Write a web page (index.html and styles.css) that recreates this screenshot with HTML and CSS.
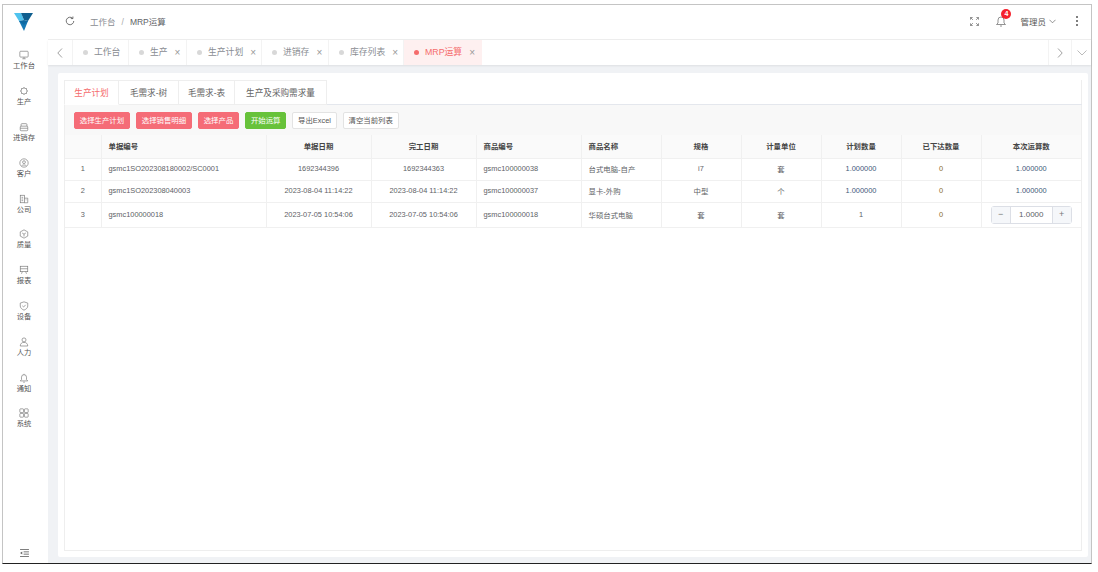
FILE: index.html
```html
<!DOCTYPE html>
<html lang="zh-CN">
<head>
    <meta charset="UTF-8">
    <title>MRP运算</title>
    <link rel="stylesheet" href="styles.css">
</head>
<body>
<div class="frame">
    <aside class="sidebar">
        <div class="logo">
            <svg width="20" height="19" viewBox="0 0 20 19">
                <polygon points="0,1 7,1 10,8 5,9" fill="#4fc3ee"/>
                <polygon points="7,1 19,1 14,9 10,8" fill="#0f5f8f"/>
                <polygon points="5,9 14,9 10,19" fill="#1679b5"/>
                <polygon points="5,9 10,8 14,9 10,13" fill="#0e6aa3"/>
            </svg>
        </div>
        <nav class="menu">
            <a class="menu-item">
                <svg class="ico" viewBox="0 0 12 12"><rect x="1" y="1.500" width="10" height="7" rx="1"/><path d="M4 10.500h4M6 8.500v2"/></svg>
                <span>工作台</span>
            </a>
            <a class="menu-item">
                <svg class="ico" viewBox="0 0 12 12"><circle cx="6" cy="6" r="3.600"/><path d="M6 1.200v1.200M6 9.600v1.200M1.200 6h1.200M9.600 6h1.200M2.600 2.600l.9.900M8.500 8.500l.9.900M9.400 2.600l-.9.900M3.500 8.500l-.9.900"/></svg>
                <span>生产</span>
            </a>
            <a class="menu-item">
                <svg class="ico" viewBox="0 0 12 12"><path d="M2.500 5V3a1 1 0 0 1 1-1h5a1 1 0 0 1 1 1v2"/><rect x="1.500" y="5" width="9" height="5.500" rx="1"/><path d="M1.500 7.500h9"/></svg>
                <span>进销存</span>
            </a>
            <a class="menu-item">
                <svg class="ico" viewBox="0 0 12 12"><circle cx="6" cy="6" r="5"/><circle cx="6" cy="5" r="1.700"/><path d="M3.200 9.600c.6-1.700 5-1.700 5.600 0"/></svg>
                <span>客户</span>
            </a>
            <a class="menu-item">
                <svg class="ico" viewBox="0 0 12 12"><rect x="1.500" y="1.500" width="5" height="9"/><path d="M6.500 5h4v5.500h-4M3 4h2M3 6h2M3 8h2M8 7h1"/></svg>
                <span>公司</span>
            </a>
            <a class="menu-item">
                <svg class="ico" viewBox="0 0 12 12"><path d="M6 1l4.500 2.500v5L6 11 1.500 8.500v-5z"/><path d="M3.800 4.800L6 6.200l2.200-1.400M6 6.200V9"/></svg>
                <span>质量</span>
            </a>
            <a class="menu-item">
                <svg class="ico" viewBox="0 0 12 12"><rect x="1.500" y="1.500" width="9" height="6.500"/><path d="M1.500 4.500h9M4 8l-1 2.500M8 8l1 2.500"/></svg>
                <span>报表</span>
            </a>
            <a class="menu-item">
                <svg class="ico" viewBox="0 0 12 12"><path d="M6 1l4.500 1.500V6c0 2.500-2.300 4-4.500 5-2.200-1-4.500-2.500-4.500-5V2.500z"/><path d="M4 5.800L5.500 7.200 8 4.600"/></svg>
                <span>设备</span>
            </a>
            <a class="menu-item">
                <svg class="ico" viewBox="0 0 12 12"><circle cx="6" cy="3.500" r="2.400"/><path d="M1.500 10.800c0-2.800 2-4.400 4.500-4.400s4.500 1.600 4.500 4.400z"/></svg>
                <span>人力</span>
            </a>
            <a class="menu-item">
                <svg class="ico" viewBox="0 0 12 12"><path d="M1.500 9.500h9L9 8V5a3 3 0 0 0-6 0v3zM5 11h2M6 1v1"/></svg>
                <span>通知</span>
            </a>
            <a class="menu-item">
                <svg class="ico" viewBox="0 0 12 12"><rect x="1" y="1" width="4.500" height="4.500" rx=".8"/><rect x="6.500" y="1" width="4.500" height="4.500" rx=".8"/><rect x="1" y="6.500" width="4.500" height="4.500" rx=".8"/><rect x="6.500" y="6.500" width="4.500" height="4.500" rx=".8"/></svg>
                <span>系统</span>
            </a>
        </nav>
        <div class="fold">
            <svg width="9" height="8" viewBox="0 0 10 9"><path d="M0 .5h10M4 3.200h6M4 5.800h6M0 8.500h10" stroke="#666" fill="none"/><path d="M0 4.500l2.500-1.800v3.600z" fill="#666"/></svg>
        </div>
    </aside>

    <div class="main">
        <header class="topbar">
            <svg class="refresh" viewBox="0 0 12 12"><path d="M10.500 6a4.500 4.500 0 1 1-1.400-3.300M9.500.6v2.500H7"/></svg>
            <div class="crumb"><span>工作台</span><i>/</i><b>MRP运算</b></div>
            <div class="top-right">
                <svg class="full" viewBox="0 0 10 10"><path d="M.5 3V.5H3M7 .5h2.500V3M.5 7v2.500H3M7 9.500h2.500V7M.8.800l2.400 2.400M9.200.800L6.800 3.200M.8 9.200l2.400-2.400M9.200 9.200L6.800 6.800"/></svg>
                <div class="bell">
                    <svg class="ico" viewBox="0 0 12 12"><path d="M1.500 9.500h9L9 8V5a3 3 0 0 0-6 0v3zM5 11h2"/></svg>
                    <em class="badge">4</em>
                </div>
                <div class="user">管理员<svg class="chev" viewBox="0 0 8 5"><path d="M.5.500L4 4 7.500.500"/></svg></div>
                <div class="dots"><u></u><u></u><u></u></div>
            </div>
        </header>

        <div class="tagbar">
            <div class="tag-arrow"><svg viewBox="0 0 6 10"><path d="M5 .5L.8 5 5 9.500"/></svg></div>
            <div class="tags">
                <div class="tag w-a"><i></i>工作台</div>
                <div class="tag w-b"><i></i>生产<s>×</s></div>
                <div class="tag w-c"><i></i>生产计划<s>×</s></div>
                <div class="tag w-d"><i></i>进销存<s>×</s></div>
                <div class="tag w-c"><i></i>库存列表<s>×</s></div>
                <div class="tag w-e active"><i></i>MRP运算<s>×</s></div>
            </div>
            <div class="tag-arrow right"><svg viewBox="0 0 6 10"><path d="M1 .5L5.200 5 1 9.500"/></svg></div>
            <div class="tag-arrow more"><svg viewBox="0 0 10 6"><path d="M.5.500L5 5 9.500.500"/></svg></div>
        </div>

        <div class="content">
            <section class="card">
                <div class="tabbox">
                    <div class="tabs">
                        <div class="tab active">生产计划</div>
                        <div class="tab">毛需求-树</div>
                        <div class="tab">毛需求-表</div>
                        <div class="tab">生产及采购需求量</div>
                    </div>
                    <div class="toolbar">
                        <button class="btn danger">选择生产计划</button>
                        <button class="btn danger">选择销售明细</button>
                        <button class="btn danger">选择产品</button>
                        <button class="btn success">开始运算</button>
                        <button class="btn">导出Excel</button>
                        <button class="btn">清空当前列表</button>
                    </div>
                    <table class="grid">
                        <colgroup>
                            <col class="c-no"><col class="c-code"><col class="c-date"><col class="c-date">
                            <col class="c-date"><col class="c-name"><col class="c-mid"><col class="c-mid">
                            <col class="c-mid"><col class="c-mid"><col>
                        </colgroup>
                        <thead>
                            <tr>
                                <th></th><th class="left">单据编号</th><th>单据日期</th><th>完工日期</th>
                                <th class="left">商品编号</th><th class="left">商品名称</th><th>规格</th><th>计量单位</th>
                                <th>计划数量</th><th>已下达数量</th><th>本次运算数</th>
                            </tr>
                        </thead>
                        <tbody>
                            <tr>
                                <td>1</td><td class="left">gsmc1SO202308180002/SC0001</td><td>1692344396</td><td>1692344363</td>
                                <td class="left">gsmc100000038</td><td class="left">台式电脑-自产</td><td>i7</td><td>套</td>
                                <td class="qty">1.000000</td><td class="zero">0</td><td class="qty">1.000000</td>
                            </tr>
                            <tr>
                                <td>2</td><td class="left">gsmc1SO202308040003</td><td>2023-08-04 11:14:22</td><td>2023-08-04 11:14:22</td>
                                <td class="left">gsmc100000037</td><td class="left">显卡-外购</td><td>中型</td><td>个</td>
                                <td class="qty">1.000000</td><td class="zero">0</td><td class="qty">1.000000</td>
                            </tr>
                            <tr class="tall">
                                <td>3</td><td class="left">gsmc100000018</td><td>2023-07-05 10:54:06</td><td>2023-07-05 10:54:06</td>
                                <td class="left">gsmc100000018</td><td class="left">华硕台式电脑</td><td>套</td><td>套</td>
                                <td>1</td><td class="zero">0</td>
                                <td>
                                    <div class="stepper"><span>−</span><b>1.0000</b><span>+</span></div>
                                </td>
                            </tr>
                        </tbody>
                    </table>
                </div>
            </section>
        </div>
    </div>
</div>
</body>
</html>
```
FILE: styles.css
```css
* {
    margin: 0;
    padding: 0;
    box-sizing: border-box;
}

html, body {
    height: 100%;
    background-color: #fff;
    overflow: hidden;
}

body {
    font-family: "Liberation Sans", "Noto Sans CJK SC", sans-serif;
    color: #606266;
    padding: 4px 0 0 2px;
}

.frame {
    width: 1090px;
    height: 560px;
    display: flex;
    border-top: 1px solid #c4c4c4;
    border-left: 1px solid #c4c4c4;
    border-right: 1px solid #c4c4c4;
    border-bottom: 1px solid #222;
}

/* sidebar */
.sidebar {
    width: 45px;
    flex-shrink: 0;
    display: flex;
    flex-direction: column;
    padding-right: 3px;
    background-color: #fff;
}

.logo {
    height: 38px;
    display: flex;
    justify-content: center;
    padding-top: 7px;
}

.menu {
    flex: 1;
}

.menu-item {
    height: 35.8px;
    display: flex;
    flex-direction: column;
    align-items: center;
    justify-content: center;
    font-size: 7.3px;
    line-height: 10px;
    color: #555;
}

.ico {
    width: 10px;
    height: 10px;
    margin-bottom: 1px;
    fill: none;
    stroke: #777;
    stroke-width: .8;
}

.fold {
    height: 14px;
    display: flex;
    justify-content: center;
}

/* top */
.main {
    flex: 1;
    min-width: 0;
    display: flex;
    flex-direction: column;
    background-color: #f0f2f5;
}

.topbar {
    height: 35px;
    flex-shrink: 0;
    display: flex;
    align-items: center;
    padding: 0 0 2px 17px;
    background-color: #fff;
    border-bottom: 1px solid #eee;
}

.refresh {
    width: 10px;
    height: 10px;
    fill: none;
    stroke: #555;
    stroke-width: 1;
}

.crumb {
    margin-left: 15px;
    font-size: 8.5px;
    color: #8a8d93;
}

.crumb i {
    margin: 0 6px;
    font-style: normal;
    color: #aaa;
}

.crumb b {
    font-weight: normal;
    color: #606266;
}

.top-right {
    margin-left: auto;
    display: flex;
    align-items: center;
    padding-right: 13px;
}

.full {
    width: 9px;
    height: 9px;
    fill: none;
    stroke: #666;
    stroke-width: .8;
}

.bell {
    position: relative;
    display: flex;
    margin-left: 16px;
}

.bell .ico {
    width: 12px;
    height: 12px;
    margin-bottom: 0;
}

.badge {
    position: absolute;
    left: 6px;
    top: -6px;
    width: 10px;
    height: 10px;
    border-radius: 50%;
    background-color: #f5222d;
    color: #fff;
    font-size: 7px;
    font-weight: bold;
    font-style: normal;
    line-height: 10px;
    text-align: center;
}

.user {
    margin-left: 13px;
    font-size: 8.5px;
    display: flex;
    align-items: center;
    color: #555;
}

.chev {
    width: 7px;
    height: 5px;
    margin-left: 3px;
    fill: none;
    stroke: #666;
    stroke-width: .8;
}

.dots {
    margin-left: 20px;
    display: flex;
    flex-direction: column;
    gap: 2px;
}

.dots u {
    width: 2px;
    height: 2px;
    background-color: #555;
    border-radius: 50%;
}

/* tag bar */
.tagbar {
    height: 25px;
    flex-shrink: 0;
    display: flex;
    background-color: #fff;
    box-shadow: 0 1px 2px rgba(0, 0, 0, .08);
}

.tag-arrow {
    width: 25px;
    display: flex;
    align-items: center;
    justify-content: center;
    border-right: 1px solid #f3f3f3;
}

.tag-arrow svg {
    width: 6px;
    height: 10px;
    fill: none;
    stroke: #888;
    stroke-width: .8;
}

.tag-arrow.right {
    width: 24px;
    border-left: 1px solid #f3f3f3;
}

.tag-arrow.more {
    width: 19px;
    border-right: none;
}

.tag-arrow.more svg {
    width: 10px;
    height: 6px;
    stroke: #aaa;
}

.tags {
    flex: 1;
    display: flex;
}

.tag {
    display: flex;
    align-items: center;
    font-size: 8.8px;
    padding: 0 0 2px 10px;
    color: #8a8d93;
    border-right: 1px solid #f3f3f3;
}

.tag i {
    width: 5px;
    height: 5px;
    border-radius: 50%;
    background-color: #d8d8d8;
    margin: 2px 6px 0 0;
}

.tag s {
    text-decoration: none;
    margin: 2px 0 0 7px;
    font-size: 10px;
    color: #999;
}

.w-a { width: 56px; }
.w-b { width: 58px; }
.w-c { width: 75px; }
.w-d { width: 67px; }
.w-e { width: 78px; }

.tag.active {
    background-color: #fef0f0;
    color: #f56c6c;
    border-right: none;
}

.tag.active i {
    background-color: #f56c6c;
}

/* card */
.content {
    flex: 1;
    min-height: 0;
    padding: 8px 3px 6px 10px;
}

.card {
    height: 100%;
    background-color: #fff;
    border-radius: 2px;
    padding: 7px 6px 6px 6px;
}

.tabbox {
    height: 100%;
    border: 1px solid #eee;
    border-top: none;
}

.tabs {
    height: 25px;
    display: flex;
    margin: 0 -1px;
    border-bottom: 1px solid #e4e7ed;
}

.tab {
    width: 56px;
    text-align: center;
    font-size: 8.6px;
    line-height: 24px;
    height: 25px;
    color: #666;
    background-color: #fff;
    border: 1px solid #eee;
    border-left: none;
}

.tab:first-child {
    width: 55px;
    border-left: 1px solid #eee;
    border-bottom-color: #fff;
    color: #f56c6c;
}

.tab:nth-child(2) {
    width: 60px;
}

.tab:last-child {
    width: 92px;
}

.toolbar {
    height: 30px;
    display: flex;
    align-items: center;
    gap: 6px;
    padding-left: 9px;
    background-color: #f8f8f8;
}

.btn {
    font-family: inherit;
    height: 17px;
    padding: 0 4.8px 1px;
    font-size: 7.4px;
    color: #555;
    background-color: #fff;
    border: 1px solid #e3e3e3;
    border-radius: 2px;
}

.btn.danger {
    background-color: #f56c77;
    border-color: #f56c77;
    color: #fff;
}

.btn.success {
    background-color: #67c23a;
    border-color: #67c23a;
    color: #fff;
}

/* table */
.grid {
    width: 1016px;
    table-layout: fixed;
    border-collapse: collapse;
    font-size: 7.4px;
}

.c-no { width: 36px; }
.c-code { width: 165px; }
.c-date { width: 105px; }
.c-name { width: 80px; }
.c-mid { width: 80px; }

.grid th, .grid td {
    height: 22px;
    padding-bottom: 1px;
    text-align: center;
    border-right: 1px solid #f0f0f0;
    border-bottom: 1px solid #f0f0f0;
    white-space: nowrap;
    overflow: hidden;
}

.grid th:last-child, .grid td:last-child {
    border-right: none;
}

.grid th {
    height: 23px;
    padding-bottom: 2px;
    background-color: #fafafa;
    color: #444;
    font-weight: bold;
}

.grid .left {
    text-align: left;
    padding-left: 7px;
}

.grid .tall td {
    height: 25px;
}

.grid .qty {
    color: #3f5a7a;
}

.grid .zero {
    color: #8a6d2f;
}

.stepper {
    width: 81px;
    height: 18px;
    margin: 1px auto 0;
    display: flex;
    border: 1px solid #dcdfe6;
    border-radius: 3px;
}

.stepper span {
    width: 18px;
    line-height: 15px;
    font-size: 9px;
    color: #777;
    background-color: #f5f7fa;
}

.stepper b {
    flex: 1;
    font-weight: normal;
    line-height: 15px;
    font-size: 8px;
    border-left: 1px solid #dcdfe6;
    border-right: 1px solid #dcdfe6;
}
```
